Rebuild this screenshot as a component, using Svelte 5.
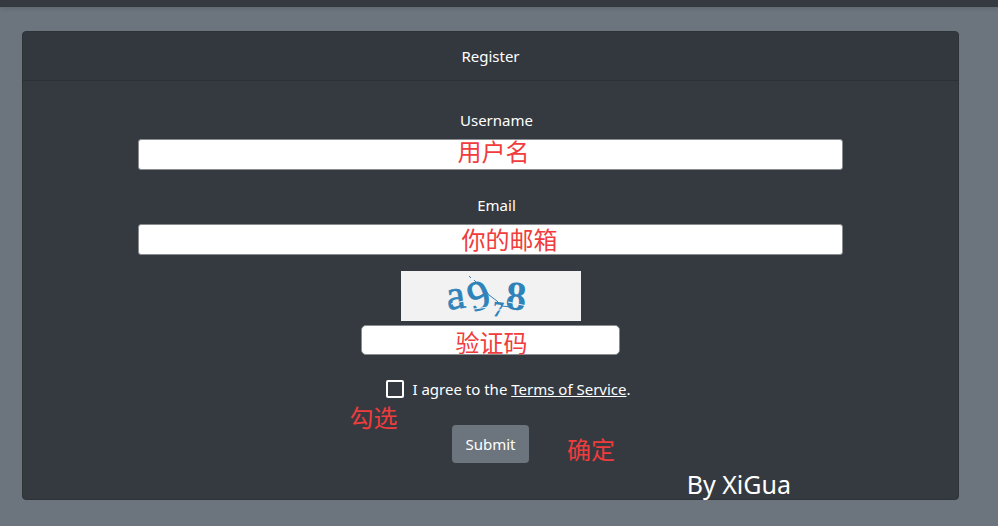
<script lang="ts">
    let username = "";
    let email = "";
    let captcha = "";
    let agreed = false;

    const onSubmit = () => {
        username = username.trim();
        email = email.trim();
        captcha = captcha.trim();
    };
</script>

<style>
    :global(body) {
        margin: 0;
        background-color: #6c757d;
    }

    .page {
        min-height: 100vh;
        color: white;
        font-family: "Noto Sans", "Noto Sans CJK SC", sans-serif;
        font-size: 15px;
        line-height: 24px;
    }

    .navbar {
        height: 7px;
        background-color: #343a40;
        box-shadow: 0 2px 4px rgba(0, 0, 0, 0.1);
    }

    main {
        padding: 24px 39px 26px 22px;
    }

    .card {
        position: relative;
        border: 1px solid #2e3338;
        border-radius: 4px;
        background-color: #353a41;
    }

    .card-header {
        padding: 12px 20px;
        border-bottom: 1px solid #2b3035;
        border-radius: 3px 3px 0 0;
        background-color: #33383f;
        text-align: center;
    }

    h1 {
        margin: 0;
        font-size: 15px;
        font-weight: 400;
    }

    form {
        display: flex;
        flex-direction: column;
        align-items: center;
        padding: 27px 115px 36px;
    }

    .field {
        position: relative;
        display: flex;
        flex-direction: column;
        gap: 7px;
        width: 100%;
        margin-bottom: 23px;
    }

    .field label {
        padding-left: 12px;
        text-align: center;
    }

    .text-input {
        box-sizing: border-box;
        width: 100%;
        height: 31px;
        padding: 4px 8px;
        border: 1px solid #8a8d90;
        border-radius: 3px;
        background-color: white;
        color: #495057;
        font: inherit;
    }

    .captcha {
        position: relative;
        display: flex;
        flex-direction: column;
        align-items: center;
        gap: 4px;
        width: 259px;
        max-width: 100%;
        margin-top: -7px;
        margin-bottom: 22px;
    }

    .captcha .text-input {
        height: 30px;
        border-radius: 5px;
    }

    .captcha svg {
        display: block;
        overflow: visible;
        background-color: #f2f2f2;
        font-family: "Liberation Serif", serif;
    }

    .terms {
        position: relative;
        display: flex;
        align-items: center;
        gap: 8px;
        margin-bottom: 24px;
        padding-left: 36px;
    }

    .terms input {
        appearance: none;
        width: 18px;
        height: 18px;
        margin: 0;
        border: 2px solid white;
        border-radius: 2px;
    }

    .terms input:checked {
        background-color: white;
        box-shadow: inset 0 0 0 2px #343a40;
    }

    a {
        color: white;
    }

    .actions {
        position: relative;
    }

    button {
        width: 77px;
        height: 38px;
        padding: 0;
        border: none;
        border-radius: 4px;
        background-color: #6c757d;
        color: white;
        font: inherit;
        cursor: pointer;
    }

    /* Hints laid over the form */
    .note {
        position: absolute;
        color: #f03c3c;
        font-size: 24px;
        line-height: 30px;
        white-space: nowrap;
        pointer-events: none;
    }

    .note.username {
        left: calc(50% - 33px);
        bottom: 3px;
    }

    .note.email {
        left: calc(50% - 29px);
        bottom: 0;
    }

    .note.code {
        left: calc(50% - 35px);
        bottom: -3px;
    }

    .note.tick {
        left: -1px;
        top: 26px;
    }

    .note.confirm {
        left: calc(100% + 38px);
        top: 10px;
    }

    .note.author {
        right: 167px;
        bottom: 0;
        color: white;
        font-size: 25px;
    }
</style>

<div class="page">
    <div class="navbar"></div>
    <main>
        <div class="card">
            <div class="card-header">
                <h1>Register</h1>
            </div>
            <form on:submit|preventDefault={onSubmit}>
                <div class="field">
                    <label for="username">Username</label>
                    <input id="username" class="text-input" type="text" bind:value={username} />
                    <span class="note username">用户名</span>
                </div>
                <div class="field">
                    <label for="email">Email</label>
                    <input id="email" class="text-input" type="email" bind:value={email} />
                    <span class="note email">你的邮箱</span>
                </div>
                <div class="captcha">
                    <svg width="180" height="50" viewBox="0 0 180 50" fill="#2f83b9">
                        <text transform="translate(47 39) rotate(-8)" font-size="42" stroke="#2f83b9" stroke-width="0.7">a</text>
                        <text transform="translate(72 41) rotate(-18)" font-size="42" stroke="#2f83b9" stroke-width="1">9</text>
                        <text transform="translate(91 45) rotate(6)" font-size="22" font-weight="700">7</text>
                        <text transform="translate(104 38) rotate(4)" font-size="41" font-weight="700">8</text>
                        <path d="M68 5l2 2M73 9l5 5 4 2 6 8 8 6 5 5 9 1" fill="none" stroke="#2f83b9" />
                        <path d="M50 33l17-4M73 38l14-2M92 40l12-2M107 31l19 4" fill="none" stroke="#f2f2f2" />
                    </svg>
                    <input class="text-input" type="text" aria-label="Captcha" bind:value={captcha} />
                    <span class="note code">验证码</span>
                </div>
                <div class="terms">
                    <input id="terms" type="checkbox" bind:checked={agreed} />
                    <label for="terms">I agree to the <a href="#terms">Terms of Service</a>.</label>
                    <span class="note tick">勾选</span>
                </div>
                <div class="actions">
                    <button type="submit">Submit</button>
                    <span class="note confirm">确定</span>
                </div>
            </form>
            <span class="note author">By XiGua</span>
        </div>
    </main>
</div>
